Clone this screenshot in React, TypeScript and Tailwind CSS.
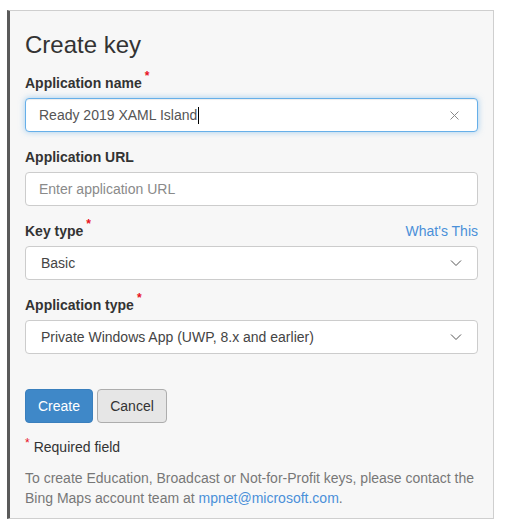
import React from 'react';

const Star = () => (
    <span className="ml-[3px] align-top text-[12px] leading-[12px] text-[#e81123] relative top-[-3px]">*</span>
);

const Chevron = () => (
    <svg width="12" height="8" viewBox="0 0 12 8" className="shrink-0">
        <path d="M1 1.5 L6 6.5 L11 1.5" fill="none" stroke="#555" strokeWidth="1" />
    </svg>
);

const Label = ({ children, required }: { children: React.ReactNode; required?: boolean }) => (
    <div className="text-[14px] leading-[20px] font-bold text-[#333] mb-[5px]">
        {children}
        {required && <Star />}
    </div>
);

export default function App() {
    return (
        <div className="w-[506px] h-[529px] bg-white font-['Liberation_Sans',Arial,sans-serif] pt-[10px] pl-[7px]">
            <div className="w-[487px] h-[509px] bg-[#f7f7f7] border-t border-r border-b border-[#cfcfcf] border-l-[3px] border-l-[#5a5a5a] pl-[15px] pr-[15px] pt-[21px] flex flex-col">
                <h2 className="text-[24px] leading-[26px] text-[#333] mb-[15px]">Create key</h2>

                <div className="mb-[15px]">
                    <Label required>Application name</Label>
                    <div className="h-[34px] bg-white rounded-[4px] border border-[#66afe9] shadow-[inset_0_1px_1px_rgba(0,0,0,0.075),0_0_6px_rgba(102,175,233,0.6)] flex items-center pl-[13px] pr-[18px]">
                        <span className="text-[14px] text-[#555]">Ready 2019 XAML Island</span>
                        <span className="w-px h-[17px] bg-black ml-[1px]" />
                        <span className="flex-1" />
                        <svg width="9" height="9" viewBox="0 0 9 9">
                            <path d="M0.5 0.5 L8.5 8.5 M8.5 0.5 L0.5 8.5" stroke="#8a8a8a" strokeWidth="1" />
                        </svg>
                    </div>
                </div>

                <div className="mb-[15px]">
                    <Label>Application URL</Label>
                    <div className="h-[34px] bg-white rounded-[4px] border border-[#ccc] flex items-center pl-[13px]">
                        <span className="text-[14px] text-[#8a8a8a]">Enter application URL</span>
                    </div>
                </div>

                <div className="mb-[15px]">
                    <div className="flex justify-between items-start">
                        <Label required>Key type</Label>
                        <a className="text-[14px] leading-[20px] text-[#4a90d9]">What's This</a>
                    </div>
                    <div className="h-[34px] bg-white rounded-[4px] border border-[#ccc] flex items-center pl-[15px] pr-[15px]">
                        <span className="flex-1 text-[14px] text-[#444]">Basic</span>
                        <Chevron />
                    </div>
                </div>

                <div className="mb-[35px]">
                    <Label required>Application type</Label>
                    <div className="h-[34px] bg-white rounded-[4px] border border-[#ccc] flex items-center pl-[15px] pr-[15px]">
                        <span className="flex-1 text-[14px] text-[#444]">Private Windows App (UWP, 8.x and earlier)</span>
                        <Chevron />
                    </div>
                </div>

                <div className="flex gap-[4px] mb-[14px]">
                    <button className="h-[34px] w-[68px] rounded-[4px] bg-[#3f88c8] border border-[#3a7fbd] text-white text-[14px]">Create</button>
                    <button className="h-[34px] w-[70px] rounded-[4px] bg-[#e6e6e6] border border-[#adadad] text-[#333] text-[14px]">Cancel</button>
                </div>

                <div className="text-[14px] leading-[20px] text-[#333] mb-[10px]">
                    <span className="text-[12px] text-[#e81123] relative top-[-5px] mr-[4px]">*</span>Required field
                </div>

                <p className="text-[14px] leading-[20px] text-[#777]">
                    To create Education, Broadcast or Not-for-Profit keys, please contact the Bing Maps account team at{' '}
                    <a className="text-[#4a90d9]">mpnet@microsoft.com</a>.
                </p>
            </div>
        </div>
    );
}
